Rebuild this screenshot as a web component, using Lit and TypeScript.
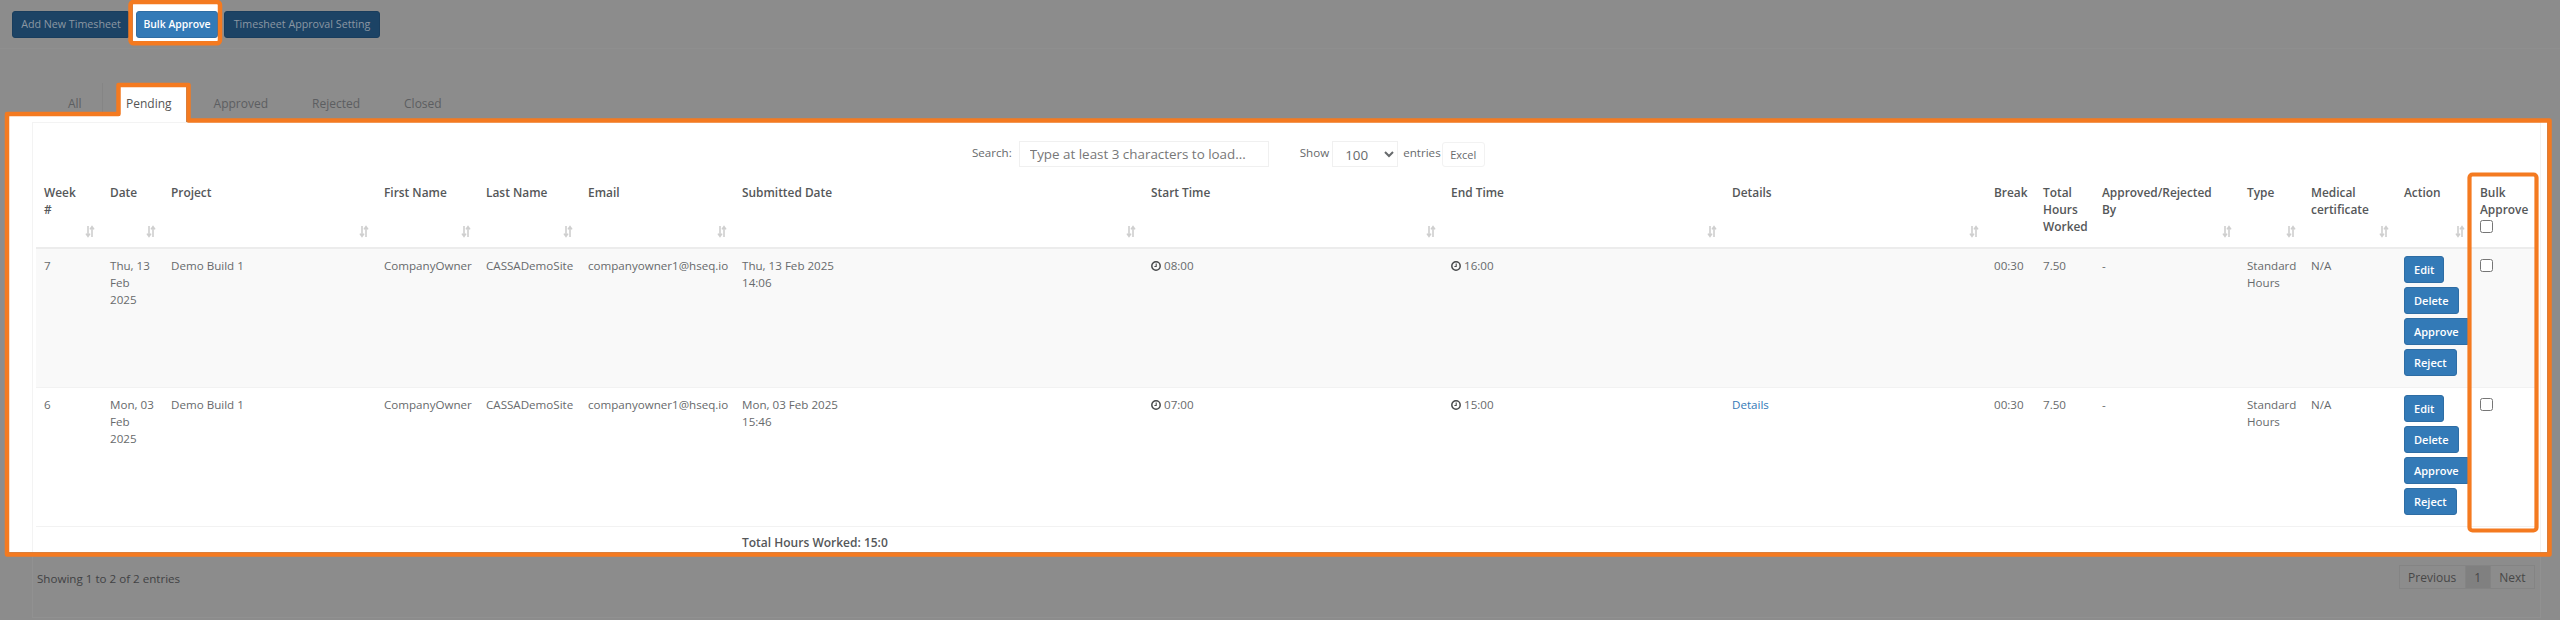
import { LitElement, html, css, svg } from "lit";
import { customElement } from "lit/decorators.js";

const HEADS: [string, boolean][] = [
  ["Week #", true], ["Date", true], ["Project", true], ["First Name", true], ["Last Name", true],
  ["Email", true], ["Submitted Date", true], ["Start Time", true], ["End Time", true], ["Details", true],
  ["Break", false], ["Total Hours Worked", false], ["Approved/Rejected By", true], ["Type", true],
  ["Medical certificate", true], ["Action", true],
];

const ROWS = [
  { week: "7", date: "Thu, 13 Feb 2025", sub: "Thu, 13 Feb 2025", subT: "14:06", start: "08:00", end: "16:00", details: false },
  { week: "6", date: "Mon, 03 Feb 2025", sub: "Mon, 03 Feb 2025", subT: "15:46", start: "07:00", end: "15:00", details: true },
];

const sortIcon = html`<svg class="sort" width="10" height="13" viewBox="0 0 10 13" aria-hidden="true">
  <path d="M3 1v10M1 8.6 3 11.4 5 8.6M7 12V2M5 4.4 7 1.6 9 4.4" fill="none" stroke="#cfcfcf" stroke-width="1.6"/>
</svg>`;

const clock = html`<svg class="clock" width="10" height="10" viewBox="0 0 10 10" aria-hidden="true">
  <circle cx="5" cy="5" r="4.2" fill="none" stroke="#47494b" stroke-width="1.5"/>
  <path d="M5.2 2.6V5.5H3.4" fill="none" stroke="#47494b" stroke-width="1.1"/>
</svg>`;

@customElement("app-root")
export class AppRoot extends LitElement {
  static styles = css`
    :host { display: block; }
    * { box-sizing: border-box; }
    .page {
      position: relative; width: 2560px; height: 620px; overflow: hidden;
      background: #8c8c8c; color: #676a6c;
      font: 11.6px/17px "Open Sans", "Liberation Sans", sans-serif;
      display: flex; flex-direction: column;
    }
    .top { height: 49px; padding: 11px 0 0 12px; display: flex; gap: 6px; align-items: flex-start; border-bottom: 1px solid #8f8f8f; isolation: isolate; }
    .tbtn {
      height: 27px; padding: 4px 0; border: 1px solid #193d5d; border-radius: 3px;
      background: #1c4365; color: #8b97a3; font: 10.7px/17px "Open Sans", sans-serif; white-space: nowrap;
    }
    .tbtn.first { width: 118px; }
    .tbtn.lit { position: relative; width: 82px; background: #337ab7; border-color: #2e6da4; color: #fff; font-weight: 600; font-size: 10.4px; }
    .tbtn.lit::before { content: ""; position: absolute; z-index: -1; inset: -8px -2px -4px -4px; background: #fff; }
    .tbtn.last { width: 156px; }
    .tabs { margin-top: 34px; height: 39px; display: flex; padding-left: 47px; line-height: 41px; color: #5c5e61; font-size: 12px; }
    .tab { padding: 0 22px; }
    .tab.all { width: 56px; padding: 0 21px; height: 29px; border-right: 1px solid #858585; line-height: 41px; }
    .tab.on { margin-left: 17px; padding: 0 14px 0 6px; background: #fff; color: #555; }
    .tab.next { margin-left: 6px; }
    .card { position: relative; margin-left: 9px; width: 2538px; height: 430px; background: #fff; }
    .card::before { content: ""; position: absolute; left: 0; top: -6px; width: 111px; height: 6px; background: #fff; }
    .panel { margin-left: 23px; width: 2509px; height: 100%; border: 1px solid #f3f3f3; border-width: 1px 1px 0; padding-left: 3px; }
    .filters { height: 53px; padding: 18px 0 0 936px; display: flex; align-items: flex-start; }
    .filters label { line-height: 24px; }
    .filters .search { width: 250px; height: 26px; margin-left: 7px; padding: 0 10px; border: 1px solid #f0f0f0; background: #fff; font: 13.4px "Open Sans", sans-serif; color: #777; }
    .filters .search::placeholder { color: #777; opacity: 1; }
    .filters .show { margin-left: 31px; }
    .filters select { width: 66px; height: 26px; margin: 0 5px 0 3px; padding: 2px 8px 0; border: 1px solid #f0f0f0; border-radius: 0; background: #fff; font: 13.4px "Open Sans", sans-serif; color: #676a6c; }
    .excel { width: 43px; height: 25px; margin: 1px 0 0 1px; padding: 0; border: 1px solid #f2f2f2; border-radius: 3px; background: #fff; font: 11px "Open Sans", sans-serif; color: #676a6c; }
    table { table-layout: fixed; width: 2500px; border-collapse: collapse; }
    th:nth-child(1) { width: 66px; } th:nth-child(2) { width: 61px; } th:nth-child(3) { width: 213px; }
    th:nth-child(4) { width: 102px; } th:nth-child(5) { width: 102px; } th:nth-child(6) { width: 154px; }
    th:nth-child(7) { width: 409px; } th:nth-child(8) { width: 300px; } th:nth-child(9) { width: 281px; }
    th:nth-child(10) { width: 262px; } th:nth-child(11) { width: 49px; } th:nth-child(12) { width: 59px; }
    th:nth-child(13) { width: 145px; } th:nth-child(14) { width: 64px; } th:nth-child(15) { width: 93px; }
    th:nth-child(16) { width: 76px; } th:nth-child(17) { width: 64px; }
    th { position: relative; height: 72px; padding: 8px; text-align: left; vertical-align: top; font-size: 11.9px; font-weight: 600; color: #555759; border-bottom: 2px solid #ececec; }
    th.sorted { padding-right: 20px; }
    th input { display: block; margin: 2px 0 0; }
    .sort { position: absolute; right: 7px; bottom: 9px; }
    td { height: 139px; padding: 8px; vertical-align: top; border-top: 1px solid #f2f2f2; }
    tbody tr:first-child td { border-top: 0; }
    tbody tr:nth-child(odd) td { background: #f9f9f9; }
    td a { color: #337ab7; text-decoration: none; }
    td input { display: block; margin: 2px 0 0; }
    .clock { margin-right: 3px; vertical-align: -1px; }
    .acts { display: flex; flex-direction: column; align-items: flex-start; gap: 4px; margin-top: -1px; }
    .acts button { height: 27px; padding: 4px 9px; border: 1px solid #2e6da4; border-radius: 3px; background: #337ab7; color: #fff; font: 600 11px/17px "Open Sans", sans-serif; white-space: nowrap; }
    .acts button.wide { padding: 4px 10px 4px 9px; }
    tfoot td { height: 25px; padding: 7px 8px 0; font-size: 12px; font-weight: 600; color: #555759; white-space: nowrap; }
    .foot { margin-left: 32px; width: 2509px; height: 66px; border: 1px solid #919191; border-width: 0 1px 1px; padding: 13px 5px 0 4px; display: flex; justify-content: space-between; align-items: flex-start; color: #414244; }
    .foot .info { margin-top: 5px; }
    .pager { display: flex; height: 24px; color: #474747; font-size: 12px; }
    .pager span { padding: 3px 8.5px; border: 1px solid #848484; line-height: 17px; }
    .pager span + span { border-left: 0; }
    .pager .cur { background: #808080; }
    .marks { position: absolute; left: 0; top: 0; pointer-events: none; }
  `;

  private head(h: [string, boolean]) {
    return html`<th class=${h[1] ? "sorted" : ""}>${h[0]}${h[1] ? sortIcon : ""}</th>`;
  }

  private row(r: (typeof ROWS)[number]) {
    return html`<tr>
      <td>${r.week}</td>
      <td>${r.date}</td>
      <td>Demo Build 1</td>
      <td>CompanyOwner</td>
      <td>CASSADemoSite</td>
      <td>companyowner1@hseq.io</td>
      <td>${r.sub}<br />${r.subT}</td>
      <td>${clock}${r.start}</td>
      <td>${clock}${r.end}</td>
      <td>${r.details ? html`<a href="#">Details</a>` : ""}</td>
      <td>00:30</td>
      <td>7.50</td>
      <td>-</td>
      <td>Standard Hours</td>
      <td>N/A</td>
      <td><div class="acts">
        <button>Edit</button><button>Delete</button><button class="wide">Approve</button><button>Reject</button>
      </div></td>
      <td><input type="checkbox" /></td>
    </tr>`;
  }

  render() {
    return html`<div class="page">
      <div class="top">
        <button class="tbtn first">Add New Timesheet</button>
        <button class="tbtn lit">Bulk Approve</button>
        <button class="tbtn last">Timesheet Approval Setting</button>
      </div>
      <div class="tabs">
        <div class="tab all">All</div>
        <div class="tab on">Pending</div>
        <div class="tab next">Approved</div>
        <div class="tab">Rejected</div>
        <div class="tab">Closed</div>
      </div>
      <div class="card"><div class="panel">
        <div class="filters">
          <label>Search:</label>
          <input class="search" placeholder="Type at least 3 characters to load..." />
          <label class="show">Show</label>
          <select><option>100</option></select>
          <label>entries</label>
          <button class="excel">Excel</button>
        </div>
        <table>
          <thead><tr>
            ${HEADS.map((h) => this.head(h))}
            <th>Bulk Approve<input type="checkbox" /></th>
          </tr></thead>
          <tbody>${ROWS.map((r) => this.row(r))}</tbody>
          <tfoot><tr>
            <td colspan="6"></td>
            <td>Total Hours Worked: 15:0</td>
            <td colspan="10"></td>
          </tr></tfoot>
        </table>
      </div></div>
      <div class="foot">
        <div class="info">Showing 1 to 2 of 2 entries</div>
        <div class="pager"><span>Previous</span><span class="cur">1</span><span>Next</span></div>
      </div>
      <svg class="marks" width="2560" height="620" viewBox="0 0 2560 620" fill="none" stroke="#f47a20" stroke-linejoin="round">
        ${svg`<rect x="130.5" y="2" width="89.5" height="41.3" rx="3" stroke-width="4.5"/>`}
        ${svg`<path d="M7 114H118.5V85H188.5V120.5H2549.5V554.5H7Z" stroke-width="4.5"/>`}
        ${svg`<rect x="2469.5" y="174.5" width="67" height="356" rx="3" stroke-width="4.2"/>`}
      </svg>
    </div>`;
  }
}
